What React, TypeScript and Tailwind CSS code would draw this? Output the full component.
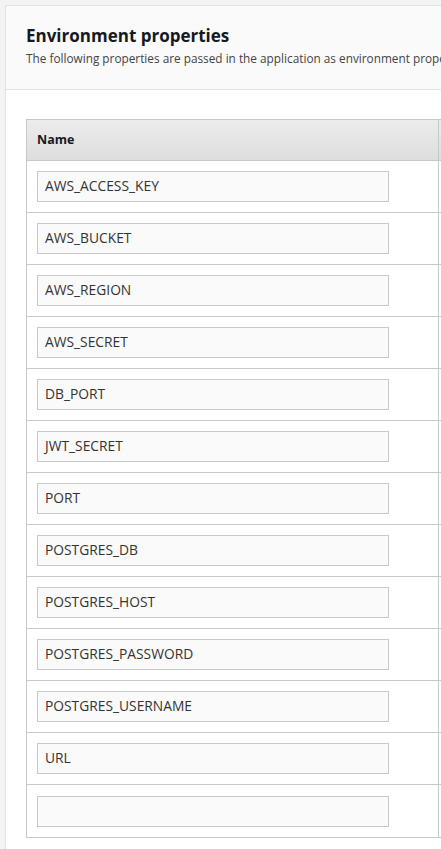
import React from "react";

const names = [
  "AWS_ACCESS_KEY",
  "AWS_BUCKET",
  "AWS_REGION",
  "AWS_SECRET",
  "DB_PORT",
  "JWT_SECRET",
  "PORT",
  "POSTGRES_DB",
  "POSTGRES_HOST",
  "POSTGRES_PASSWORD",
  "POSTGRES_USERNAME",
  "URL",
  "",
];

export default function App() {
  return (
    <div className="min-h-[849px] w-[441px] overflow-hidden bg-[#f2f3f3] pt-[5px] pl-[5px] font-['Open_Sans',sans-serif] text-[#16191f]">
      <div className="w-[600px] min-h-[844px] border-l border-t border-[#e1e4e4] bg-white">
        {/* Panel header */}
        <div className="h-[84px] border-b border-[#e1e4e4] bg-[#fafafa] pl-[20px] pt-[19px]">
          <h2 className="text-[17px] font-bold leading-[22px]">Environment properties</h2>
          <p className="mt-[3px] whitespace-nowrap text-[11.8px] leading-[16px] text-[#444]">
            The following properties are passed in the application as environment properties
          </p>
        </div>

        {/* Table */}
        <div className="pl-[20px] pt-[29px]">
          <div className="w-[560px] border border-[#c8c8c8]">
            <div className="flex h-[41px] border-b border-[#c8c8c8] bg-gradient-to-b from-[#ececec] to-[#dedede]">
              <div className="flex w-[412px] items-center border-r border-[#c8c8c8] pl-[10px] text-[12.5px] font-bold">
                Name
              </div>
              <div className="flex-1" />
            </div>
            {names.map((n, i) => (
              <div
                key={i}
                className={`flex h-[52px] ${i < names.length - 1 ? "border-b" : ""} border-[#c8c8c8]`}
              >
                <div className="flex w-[412px] items-center border-r border-[#c8c8c8] pl-[10px]">
                  <div className="flex h-[31px] w-[352px] items-center border border-[#c8c8c8] bg-[#fafafa] pl-[7px] text-[13.8px] text-[#333]">
                    {n}
                  </div>
                </div>
                <div className="flex-1" />
              </div>
            ))}
          </div>
        </div>
      </div>
    </div>
  );
}
